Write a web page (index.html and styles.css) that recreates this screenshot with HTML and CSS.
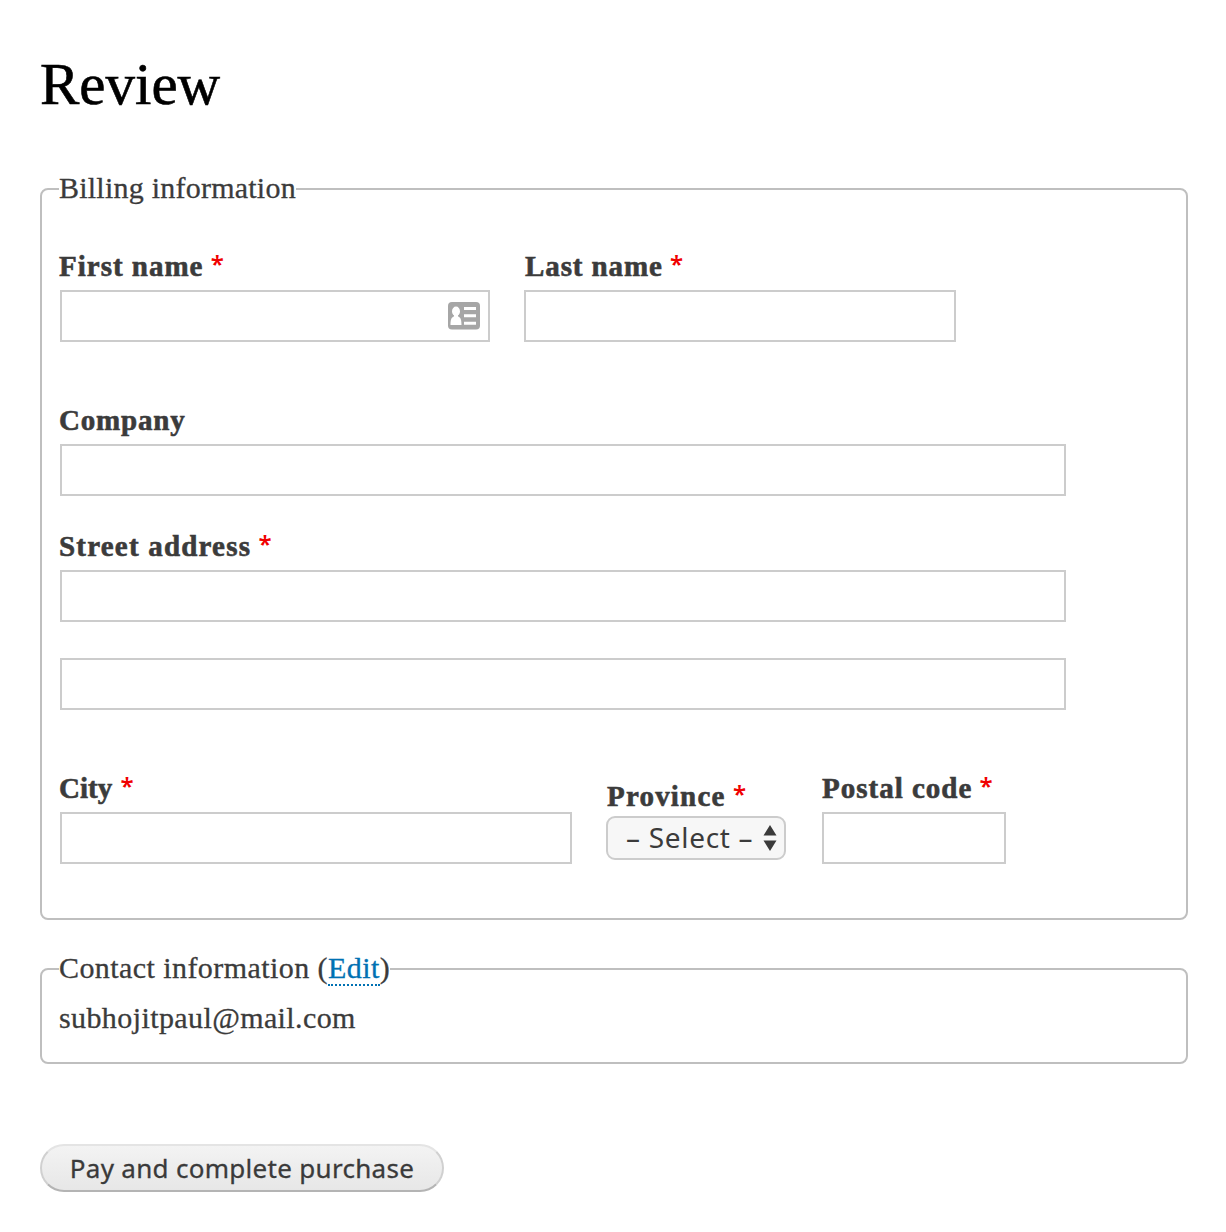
FILE: index.html
```html
<!DOCTYPE html>
<html lang="en">
<head>
<meta charset="utf-8">
<title>Review</title>
<link rel="stylesheet" href="styles.css">
</head>
<body>
<h1 class="title">Review</h1>
<form class="checkout">
  <fieldset class="panel billing">
    <legend class="legend">Billing information</legend>
    <div class="row">
      <div class="field first">
        <label class="label" for="first">First name <span class="req">*</span></label>
        <div class="input">
          <input class="control" id="first" type="text">
          <svg class="card" width="32" height="28" viewBox="0 0 32 28">
            <rect width="32" height="27.500" rx="4" fill="#a6a6a6"/>
            <ellipse cx="8" cy="9.400" rx="4" ry="4.800" fill="#fff"/>
            <path d="M6 12h4v2.500c2.600.8 3.500 3 3.500 8.500H2.500c0-5.500.9-7.700 3.500-8.500z" fill="#fff"/>
            <path d="M16 6.500h12M16 13.800h12M16 21.300h12" stroke="#fff" stroke-width="3"/>
          </svg>
        </div>
      </div>
      <div class="field last">
        <label class="label" for="last">Last name <span class="req">*</span></label>
        <div class="input"><input class="control" id="last" type="text"></div>
      </div>
    </div>
    <div class="field wide company">
      <label class="label" for="company">Company</label>
      <div class="input"><input class="control" id="company" type="text"></div>
    </div>
    <div class="field wide street">
      <label class="label" for="street">Street address <span class="req">*</span></label>
      <div class="input"><input class="control" id="street" type="text"></div>
      <div class="input second"><input class="control" type="text" aria-label="Street address line 2"></div>
    </div>
    <div class="row locality">
      <div class="field city">
        <label class="label" for="city">City <span class="req">*</span></label>
        <div class="input"><input class="control" id="city" type="text"></div>
      </div>
      <div class="field province">
        <span class="label">Province <span class="req">*</span></span>
        <div class="select" role="combobox" aria-label="Province">
          <span class="choice">– Select –</span>
          <svg width="14" height="26" viewBox="0 0 14 26"><path d="M7 0l6.500 10.500H.5zM7 26l6.500-10.500H.5z" fill="#3b3b3b"/></svg>
        </div>
      </div>
      <div class="field postal">
        <label class="label" for="postal">Postal code <span class="req">*</span></label>
        <div class="input"><input class="control" id="postal" type="text"></div>
      </div>
    </div>
  </fieldset>
  <fieldset class="panel contact">
    <legend class="legend">Contact information (<a class="edit" href="#">Edit</a>)</legend>
    <div class="email">subhojitpaul@mail.com</div>
  </fieldset>
  <button class="pay" type="button">Pay and complete purchase</button>
</form>
</body>
</html>
```

FILE: styles.css
```css
* { box-sizing: border-box; }
body {
  margin: 0;
  padding: 48px 38px 40px 40px;
  background: #fff;
  color: #3b3b3b;
  font: 30px/36px "Liberation Serif", serif;
}
.title {
  margin: 0 0 51px;
  color: #000;
  font-size: 59px;
  font-weight: 400;
  line-height: 72px;
  -webkit-text-stroke: .6px currentColor;
}
.checkout { display: flex; flex-direction: column; align-items: flex-start; }
.panel {
  width: 1148px;
  margin: 0;
  border: 2px solid #bfbfbf;
  border-radius: 8px;
}
.billing { padding: 43px 18px 54px; }
.contact { margin-top: 31px; padding: 13px 18px 26px; }
.legend {
  height: 36px;
  margin-left: -1px;
  padding: 0;
  line-height: 34px;
  letter-spacing: .23px;
  white-space: nowrap;
}
.legend, .email { -webkit-text-stroke: .3px currentColor; }
.contact .legend { letter-spacing: .43px; }
.row { display: flex; gap: 34px; }
.field { display: flex; flex-direction: column; }
.first { width: 430px; }
.last { width: 432px; }
.wide { width: 1006px; }
.company { margin-top: 62px; }
.street { margin-top: 34px; }
.second { margin-top: 36px; }
.locality { margin-top: 62px; align-items: flex-end; }
.city { width: 512px; }
.province { width: 180px; margin-bottom: 4px; }
.postal { width: 184px; margin-left: 2px; }
.label {
  height: 40px;
  margin-left: -1px;
  font-size: 29px;
  font-weight: 700;
  line-height: 33px;
  letter-spacing: 1px;
  white-space: nowrap;
  -webkit-text-stroke: .6px currentColor;
}
.last .label { margin-left: 1px; letter-spacing: .9px; }
.company .label { letter-spacing: .8px; }
.street .label { letter-spacing: 1.2px; }
.city .label { letter-spacing: 0; }
.province .label { height: 36px; margin-left: 1px; letter-spacing: 1.2px; }
.postal .label { margin-left: 0; }
.req {
  color: #f00000;
  font: 600 24px/1 "Noto Sans", sans-serif;
  letter-spacing: 0;
  vertical-align: 3px;
  margin-left: -1px;
  -webkit-text-stroke: 0;
}
.city .req { margin-left: 1px; }
.input {
  display: flex;
  align-items: center;
  height: 52px;
  border: 2px solid #ccc;
  padding: 0 8px;
  background: #fff;
}
.control {
  flex: 1;
  min-width: 0;
  border: 0;
  padding: 0;
  outline: 0;
  background: none;
  color: inherit;
  font: inherit;
}
.select {
  display: flex;
  align-items: center;
  justify-content: space-between;
  height: 44px;
  padding: 0 7px 0 18px;
  border: 2px solid #ccc;
  border-radius: 9px;
  background: #f7f7f7;
  font: 28px/38px "Noto Sans", sans-serif;
  letter-spacing: .7px;
  white-space: nowrap;
}
.choice { height: 40px; }
.edit {
  display: inline-block;
  height: 35px;
  border-bottom: 2px dotted #0071b3;
  color: #0071b3;
  text-decoration: none;
}
.email { margin-left: -1px; letter-spacing: .4px; }
.pay {
  width: 404px;
  height: 48px;
  margin-top: 80px;
  padding: 0;
  border: 2px solid #d0d0d0;
  border-top-color: #e4e4e4;
  border-bottom-color: #b4b4b4;
  border-radius: 24px;
  background: linear-gradient(#f3f3f3, #e7e7e7);
  color: #3a3a3a;
  font: 26px/40px "Noto Sans", sans-serif;
  letter-spacing: .3px;
  white-space: nowrap;
  -webkit-text-stroke: .3px currentColor;
}
```
